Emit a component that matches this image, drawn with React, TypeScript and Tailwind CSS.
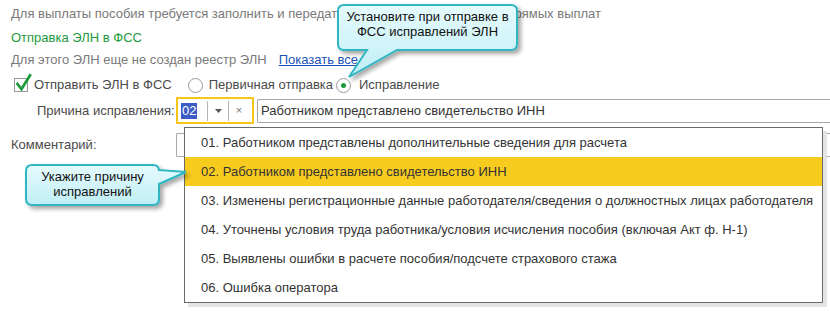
import React from "react";

const reasons = [
  "01. Работником представлены дополнительные сведения для расчета",
  "02. Работником представлено свидетельство ИНН",
  "03. Изменены регистрационные данные работодателя/сведения о должностных лицах работодателя",
  "04. Уточнены условия труда работника/условия исчисления пособия (включая Акт ф. Н-1)",
  "05. Выявлены ошибки в расчете пособия/подсчете страхового стажа",
  "06. Ошибка оператора",
];

const Radio = ({ checked }: { checked?: boolean }) => (
  <span className="flex h-[15px] w-[15px] items-center justify-center rounded-full border border-[#9a9a9a] bg-white">
    {checked && <span className="h-[5px] w-[5px] rounded-full bg-[#1e9a3e]" />}
  </span>
);

// speech bubble drawn as svg, text laid over it
const Callout = ({
  className,
  width,
  height,
  path,
  children,
}: {
  className: string;
  width: number;
  height: number;
  path: string;
  children: React.ReactNode;
}) => (
  <div className={`absolute ${className}`}>
    <svg width={width} height={height} className="absolute left-0 top-0">
      <defs>
        <linearGradient id="cfill" x1="0" y1="0" x2="0" y2="1">
          <stop offset="0" stopColor="#e6fbfe" />
          <stop offset="1" stopColor="#bfeef5" />
        </linearGradient>
        <filter id="cshadow" x="-20%" y="-20%" width="140%" height="150%">
          <feDropShadow dx="3" dy="3" stdDeviation="2" floodColor="#000" floodOpacity="0.35" />
        </filter>
      </defs>
      <path d={path} fill="url(#cfill)" stroke="#2fb7c3" strokeWidth="2" filter="url(#cshadow)" />
    </svg>
    {children}
  </div>
);

export default function App() {
  return (
    <div
      className="relative h-[311px] w-[830px] overflow-hidden bg-white text-[13px] text-[#4a4a4a]"
      style={{ fontFamily: '"Liberation Sans", Arial, sans-serif' }}
    >
      <div className="flex flex-col pl-[11px] pt-[4px]">
        <div className="flex h-[20px] items-center whitespace-nowrap text-[#7a7a7a]">
          Для выплаты пособия требуется заполнить и передать сведения в ФСС в рамках прямых выплат
        </div>
        <div className="mt-[4px] flex h-[20px] items-center text-[#1e9a3e]">Отправка ЭЛН в ФСС</div>
        <div className="mt-[2px] flex h-[20px] items-center text-[#7a7a7a]">
          Для этого ЭЛН еще не создан реестр ЭЛН
          <span className="ml-[12px] text-[#1a55b5] underline">Показать все</span>
        </div>
        <div className="mt-[5px] flex h-[20px] items-center">
          <span className="relative ml-[3px] h-[14px] w-[14px] border border-[#9a9a9a] bg-white">
            <svg width="17" height="19" className="absolute left-[0px] top-[-6px]" viewBox="0 0 17 19">
              <path d="M2.5 11 L6.5 16 L15 2.5" fill="none" stroke="#1e9a3e" strokeWidth="2.8" strokeLinecap="square" />
            </svg>
          </span>
          <span className="ml-[6px]">Отправить ЭЛН в ФСС</span>
          <span className="ml-[16px]">
            <Radio />
          </span>
          <span className="ml-[6px]">Первичная отправка</span>
          <span className="ml-[3px]">
            <Radio checked />
          </span>
          <span className="ml-[8px]">Исправление</span>
        </div>
        <div className="mt-[2px] flex h-[27px] items-center">
          <span className="ml-[26px] w-[139px]">Причина исправления:</span>
          <div className="flex h-[27px] w-[78px] items-center border-2 border-[#f5c518] bg-white">
            <span className="ml-[3px] bg-[#3d5bc4] px-[1px] leading-[16px] text-white">02</span>
            <span className="ml-[10px] h-[20px] w-px bg-[#b5b5b5]" />
            <span className="flex w-[20px] justify-center">
              <svg width="7" height="4" viewBox="0 0 7 4">
                <path d="M0 0 L7 0 L3.5 4 Z" fill="#555" />
              </svg>
            </span>
            <span className="h-[20px] w-px bg-[#b5b5b5]" />
            <span className="flex w-[19px] justify-center text-[11px] text-[#777]">×</span>
          </div>
          <div className="ml-[3px] flex h-[24px] flex-1 items-center rounded-l-[2px] border border-r-0 border-[#a8a8a8] pl-[3px] text-[#333]">
            Работником представлено свидетельство ИНН
          </div>
        </div>
        <div className="mt-[9px] flex h-[24px] items-center">
          <span className="w-[165px]">Комментарий:</span>
          <div className="h-[24px] flex-1 rounded-l-[2px] border border-r-0 border-[#a8a8a8]" />
        </div>
      </div>

      {/* dropdown list */}
      <div className="absolute left-[184px] top-[127px] w-[639px] border border-[#6a6a6a] bg-white text-[#333] shadow-[4px_4px_0_0_#e4e4e4]">
        {reasons.map((r, i) => (
          <div
            key={r}
            className={`flex h-[29px] items-center pl-[16px] ${i === 1 ? "bg-[#f8cb1f]" : ""}`}
          >
            {r}
          </div>
        ))}
      </div>

      <Callout
        className="left-[330px] top-0 h-[85px] w-[200px]"
        width={200}
        height={85}
        path="M14 5 H181 Q187 5 187 11 V44 Q187 50 181 50 H67 L19 77 L37 50 H14 Q8 50 8 44 V11 Q8 5 14 5 Z"
      >
        <div className="absolute left-[8px] top-[9px] w-[179px] text-center text-[13px] leading-[15px] text-[#111]">
          Установите при отправке в
          <br />
          ФСС исправлений ЭЛН
        </div>
      </Callout>

      <Callout
        className="left-[20px] top-[160px] h-[55px] w-[175px]"
        width={175}
        height={55}
        path="M12 5 H133 Q139 5 139 11 V10 L166 12 L139 24 V39 Q139 45 133 45 H12 Q6 45 6 39 V11 Q6 5 12 5 Z"
      >
        <div className="absolute left-[6px] top-[9px] w-[133px] text-center text-[13px] leading-[15px] text-[#111]">
          Укажите причину
          <br />
          исправлений
        </div>
      </Callout>
    </div>
  );
}
